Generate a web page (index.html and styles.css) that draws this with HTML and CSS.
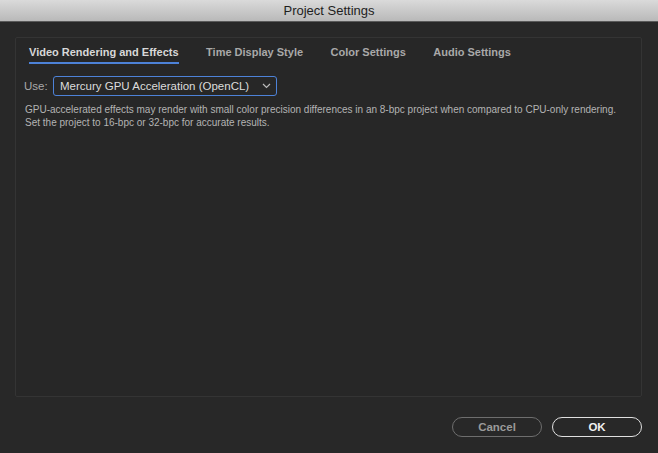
FILE: index.html
```html
<!DOCTYPE html>
<html>
<head>
<meta charset="utf-8">
<link rel="stylesheet" href="styles.css">
</head>
<body>
<div class="window">
  <div class="titlebar">Project Settings</div>
  <div class="content">
    <div class="panel">
      <div class="tabs">
        <div class="tab active">Video Rendering and Effects</div>
        <div class="tab">Time Display Style</div>
        <div class="tab">Color Settings</div>
        <div class="tab">Audio Settings</div>
      </div>
      <div class="use-row">
        <span class="use-label">Use:</span>
        <div class="select">
          <span class="select-text">Mercury GPU Acceleration (OpenCL)</span>
          <svg class="chev" width="9" height="6" viewBox="0 0 9 6"><path d="M1 1 L4.5 4.5 L8 1" fill="none" stroke="#bbb" stroke-width="1.2"/></svg>
        </div>
      </div>
      <p class="info">GPU-accelerated effects may render with small color precision differences in an 8-bpc project when compared to CPU-only rendering.<br>Set the project to 16-bpc or 32-bpc for accurate results.</p>
    </div>
    <div class="buttons">
      <button class="btn cancel">Cancel</button>
      <button class="btn ok">OK</button>
    </div>
  </div>
</div>
</body>
</html>
```

FILE: styles.css
```css
html, body {
  margin: 0;
  padding: 0;
  background: #282828;
}
.window {
  width: 658px;
  height: 453px;
  background: #282828;
  font-family: "Liberation Sans", Arial, sans-serif;
  display: flex;
  flex-direction: column;
  overflow: hidden;
}
.titlebar {
  height: 21px;
  line-height: 22px;
  text-align: center;
  font-size: 13px;
  color: #1e1e1e;
  background: linear-gradient(#dadada, #b9b9b9);
  border-bottom: 1px solid #5a5a5a;
  flex: none;
}
.content {
  flex: 1;
  display: flex;
  flex-direction: column;
  padding: 15px 16px 0 15px;
}
.panel {
  height: 358px;
  border: 1px solid #343434;
  border-radius: 2px;
  background: #272727;
  padding: 0 8px;
}
.tabs {
  display: flex;
  gap: 27.5px;
  margin: 6px 0 0 5px;
}
.tab {
  font-size: 11px;
  font-weight: bold;
  color: #a9a9a9;
  height: 18px;
  line-height: 16px;
  border-bottom: 2px solid transparent;
}
.tab.active {
  color: #d8d8d8;
  border-bottom-color: #4d82d8;
}
.use-row {
  display: flex;
  align-items: center;
  margin-top: 12px;
  height: 20px;
}
.use-label {
  font-size: 11.5px;
  color: #a9a9a9;
  width: 29px;
}
.select {
  box-sizing: border-box;
  width: 224px;
  height: 20px;
  border: 1px solid #4d82d8;
  border-radius: 3px;
  display: flex;
  align-items: center;
  padding: 0 5px 0 6px;
  justify-content: space-between;
}
.select-text {
  font-size: 11.5px;
  color: #dcdcdc;
}
.info {
  margin: 7px 0 0 1px;
  font-size: 10px;
  line-height: 13px;
  color: #b4b4b4;
  white-space: nowrap;
}
.buttons {
  display: flex;
  justify-content: flex-end;
  gap: 10px;
  margin-top: 20px;
}
.btn {
  box-sizing: border-box;
  width: 90px;
  height: 20px;
  border-radius: 10px;
  background: transparent;
  font-family: "Liberation Sans", Arial, sans-serif;
  font-size: 11.5px;
  font-weight: bold;
  padding: 0;
}
.cancel {
  border: 1.5px solid #6e6e6e;
  color: #9a9a9a;
}
.ok {
  border: 1.5px solid #e0e0e0;
  color: #f0f0f0;
}
```
